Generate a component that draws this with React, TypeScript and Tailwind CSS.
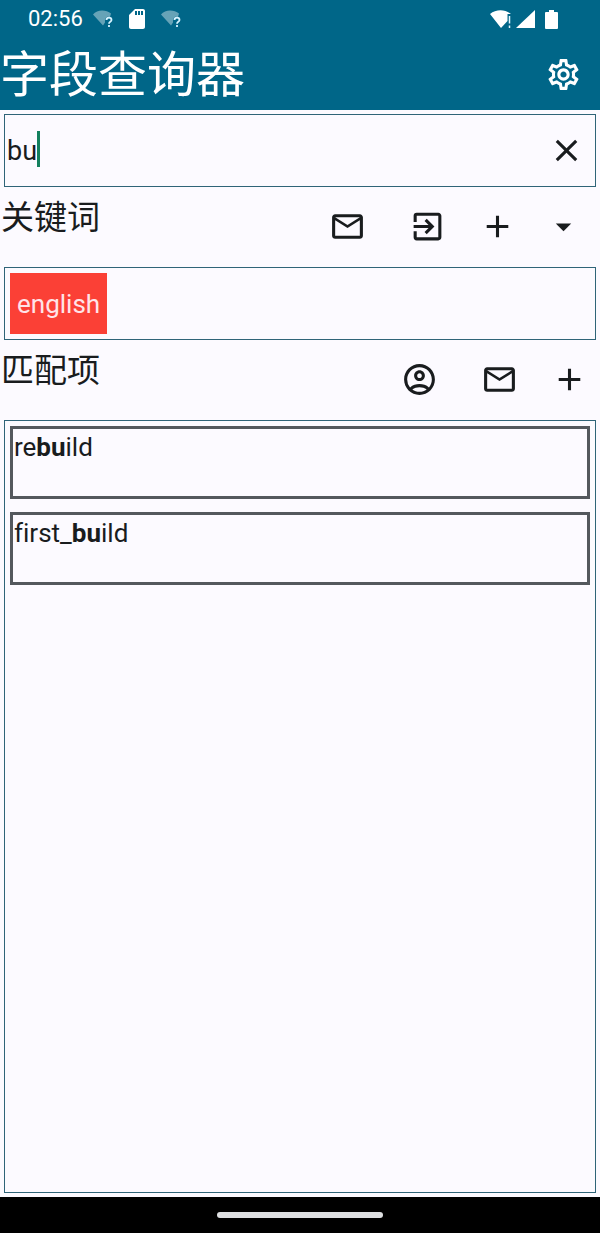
import { useState } from "react";
import type { ReactNode } from "react";
import {
  MdAdd,
  MdArrowDropDown,
  MdClose,
  MdExitToApp,
  MdMailOutline,
  MdOutlineAccountCircle,
  MdOutlineSettings,
  MdSdCard,
} from "react-icons/md";

function WifiUnknown() {
  return (
    <svg viewBox="0 0 20 18" className="h-[18px] w-5" aria-hidden="true">
      <path d="M0 4.500C4-.5 13-.5 18 3.500L17 7C13 6 12 8 12 12.500L10 15.500Z" fill="#fff" opacity=".4" />
      <path d="M13.500 10C13.500 6.800 18.500 6.800 18.500 10C18.500 12 16 11.700 16 13.800M16 15V17" fill="none" stroke="#d6f3ff" strokeWidth="1.800" />
    </svg>
  );
}

function WifiAlert() {
  return (
    <svg viewBox="0 0 22 18" className="h-[18px] w-[22px]" aria-hidden="true">
      <path d="M0 4C6-1 15-1 21 4H17.500V11L11 18Z" fill="#fff" />
      <path d="M19.500 6V13.500M19.500 15.500V18" stroke="#e6f6ff" strokeWidth="1.500" />
    </svg>
  );
}

function StatusBar() {
  return (
    <div className="flex h-[38px] items-center justify-between pr-[42px] pl-7">
      <div className="flex items-center">
        <span className="text-[22px] leading-6">02:56</span>
        <div className="flex items-center gap-3 pl-2.5">
          <WifiUnknown />
          <MdSdCard className="size-6" aria-hidden="true" />
          <WifiUnknown />
        </div>
      </div>
      <div className="flex items-center gap-1">
        <WifiAlert />
        <svg viewBox="0 0 19 18" className="h-[18px] w-[19px]" aria-hidden="true">
          <path d="M19 0V18H0Z" fill="#fff" />
        </svg>
        <svg viewBox="0 0 13 19" className="ml-1.5 h-[19px] w-[13px]" aria-hidden="true">
          <path d="M4 0H9V2H12Q13 2 13 3V18Q13 19 12 19H1Q0 19 0 18V3Q0 2 1 2H4Z" fill="#fff" />
        </svg>
      </div>
    </div>
  );
}

function IconButton({ label, children }: { label: string; children: ReactNode }) {
  return (
    <button type="button" aria-label={label} className="flex size-[66px] items-center justify-center text-[37px]">
      {children}
    </button>
  );
}

function SectionHeader({ title, children }: { title: string; children: ReactNode }) {
  return (
    <div className="-ml-1 flex h-20 justify-between">
      <h2 className="pt-2 pl-px text-[33px] leading-[46px]">{title}</h2>
      <div className="flex items-center pb-px">{children}</div>
    </div>
  );
}

const matches = [
  { before: "re", hit: "bu", after: "ild" },
  { before: "first_", hit: "bu", after: "ild" },
];

export default function App() {
  const [query, setQuery] = useState("bu");
  return (
    <div className="flex min-h-screen flex-col bg-[#fcfaff] font-['Roboto','Noto_Sans_CJK_SC',sans-serif] text-[#191c1e]">
      <header className="bg-[#006688] text-white">
        <StatusBar />
        <div className="flex h-[72px] items-center justify-between pr-[18px]">
          <h1 className="pt-1 text-[49px] leading-[68px]">字段查询器</h1>
          <button type="button" aria-label="设置" className="text-[37px]">
            <MdOutlineSettings />
          </button>
        </div>
      </header>

      <main className="flex grow flex-col px-1 py-1">
        <div className="relative flex h-[73px] items-center border border-[#2f6478] pr-2.5">
          <input
            aria-label="查询"
            value={query}
            onChange={(e) => setQuery(e.target.value)}
            className="h-full min-w-0 grow bg-transparent pl-0.5 text-[27px] outline-none"
          />
          <span className="absolute top-4 left-8 h-9 w-[3px] bg-[#14805e]" />
          <button type="button" aria-label="清除" onClick={() => setQuery("")} className="text-[37px]">
            <MdClose />
          </button>
        </div>

        <SectionHeader title="关键词">
          <div className="flex gap-3.5 pr-1">
            <IconButton label="发送关键词"><MdMailOutline /></IconButton>
            <IconButton label="导入关键词"><MdExitToApp /></IconButton>
          </div>
          <IconButton label="添加关键词"><MdAdd /></IconButton>
          <IconButton label="展开"><MdArrowDropDown /></IconButton>
        </SectionHeader>

        <div className="flex h-[73px] items-stretch border border-[#2f6478] p-[5px]">
          <button type="button" className="bg-[#fb4036] px-[7px] pt-0.5 text-[26px] text-[#ffe4e8]">english</button>
        </div>

        <SectionHeader title="匹配项">
          <div className="-mr-1.5 flex items-center">
            <div className="flex gap-3.5 pr-1">
              <IconButton label="账户"><MdOutlineAccountCircle /></IconButton>
              <IconButton label="发送匹配项"><MdMailOutline /></IconButton>
            </div>
            <IconButton label="添加匹配项"><MdAdd /></IconButton>
          </div>
        </SectionHeader>

        <ul className="flex grow flex-col gap-[13px] border border-[#2f6478] p-[5px]">
          {matches.map((m) => (
            <li
              key={m.before}
              className="h-[73px] border-3 border-[#54585d] pl-px text-[26px] leading-9 [font-variant-ligatures:none]"
            >
              {m.before}
              <b>{m.hit}</b>
              {m.after}
            </li>
          ))}
        </ul>
      </main>

      <footer className="flex h-9 items-center justify-center bg-black">
        <div className="h-1.5 w-[166px] rounded-full bg-[#dedfe1]" />
      </footer>
    </div>
  );
}
